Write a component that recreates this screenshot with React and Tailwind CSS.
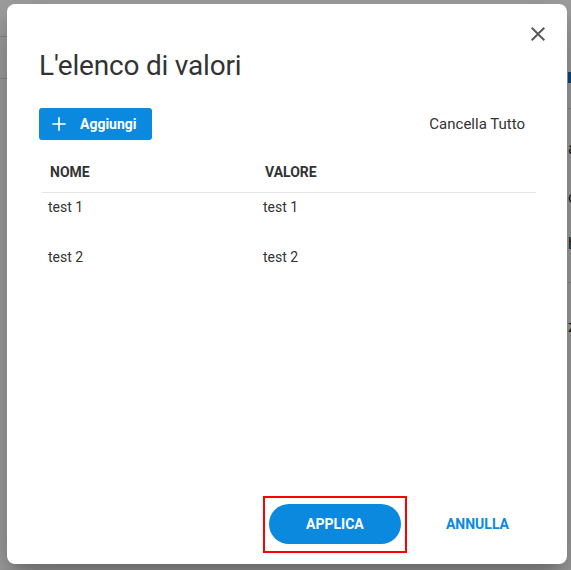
import React from "react";

function CloseIcon() {
  return (
    <svg width="24" height="24" viewBox="0 0 24 24" aria-hidden="true">
      <path
        fill="#5a5a5a"
        d="M19 6.41L17.59 5 12 10.59 6.41 5 5 6.41 10.59 12 5 17.59 6.41 19 12 13.41 17.59 19 19 17.59 13.41 12z"
      />
    </svg>
  );
}

function PlusIcon() {
  return (
    <svg width="20" height="20" viewBox="0 0 24 24" aria-hidden="true">
      <path fill="#ffffff" d="M20 13h-7v7h-2v-7H4v-2h7V4h2v7h7v2z" />
    </svg>
  );
}

const rows = [
  { nome: "test 1", valore: "test 1" },
  { nome: "test 2", valore: "test 2" },
];

export default function App() {
  return (
    <div className="relative w-[571px] h-[570px] overflow-hidden bg-white font-['Roboto','Noto_Sans',sans-serif]">
      {/* background page */}
      <div className="flex h-full w-full">
        <div className="flex w-[566px] shrink-0 flex-col">
          <div className="h-[37px] border-b border-[#dcdcdc]" />
          <div className="h-[42px] border-b border-[#dcdcdc]" />
        </div>
        <div className="flex w-[100px] shrink-0 flex-col pl-[2px] text-[16px] text-[#333]">
          <div className="mt-[72px] h-[11px] w-[10px] bg-[#1976d2]" />
          <div className="mt-[25px] border-b border-[#dcdcdc]" />
          <div className="mt-[30px] leading-5">abc</div>
          <div className="mt-[29px] leading-5">opt</div>
          <div className="mt-[26px] leading-5">home</div>
          <div className="mt-[28px] border-b border-[#dcdcdc]" />
          <div className="mt-[34px] leading-5">zona</div>
        </div>
      </div>

      {/* overlay */}
      <div className="absolute inset-0 bg-black/[0.37]" />

      {/* dialog */}
      <div className="absolute left-[7px] top-[4px] flex h-[560px] w-[560px] flex-col rounded-lg bg-white shadow-[0_11px_15px_-7px_rgba(0,0,0,0.2),0_24px_38px_3px_rgba(0,0,0,0.14),0_9px_46px_8px_rgba(0,0,0,0.12)]">
        <div className="flex justify-end pr-[17px] pt-[18px]">
          <button className="flex h-6 w-6 items-center justify-center">
            <CloseIcon />
          </button>
        </div>

        <h2 className="mt-[2px] pl-[32px] text-[28px] font-normal leading-9 tracking-[-0.2px] text-[#333]">
          L'elenco di valori
        </h2>

        <div className="mt-6 flex items-center justify-between px-[32px]">
          <button className="flex h-8 w-[113px] items-center gap-[11px] rounded-[3px] bg-[#0a89de] pl-[10px] text-[14px] font-bold text-white">
            <PlusIcon />
            <span>Aggiungi</span>
          </button>
          <button className="px-[10px] text-[15px] text-[#333]">Cancella Tutto</button>
        </div>

        <div className="ml-[35px] mr-[31px] mt-[13px] text-[14px] text-[#333]">
          <div className="flex h-10 items-center border-b border-[#e4e4e4] font-bold">
            <div className="w-[215px] pl-[8px]">NOME</div>
            <div className="flex-1 pl-[8px]">VALORE</div>
          </div>
          {rows.map((r) => (
            <div key={r.nome} className="flex h-[50px] items-start pt-[6px] leading-4">
              <div className="w-[215px] pl-[6px]">{r.nome}</div>
              <div className="flex-1 pl-[6px]">{r.valore}</div>
            </div>
          ))}
        </div>

        <div className="mt-auto flex items-center justify-end pb-[11px] pr-[42px]">
          <div className="border-2 border-[#ff0000] px-[4px] pb-[7px] pt-[6px]">
            <button className="h-10 w-[132px] rounded-full bg-[#0a89de] text-[14px] font-bold text-white">
              APPLICA
            </button>
          </div>
          <button className="ml-[23px] px-[16px] text-[14px] font-bold text-[#0a89de]">
            ANNULLA
          </button>
        </div>
      </div>
    </div>
  );
}
